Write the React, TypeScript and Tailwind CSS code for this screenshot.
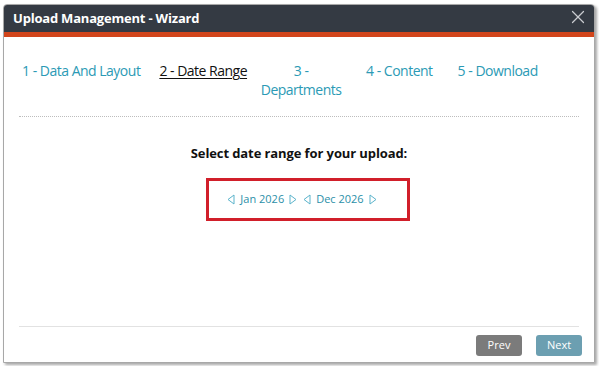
import { X } from "lucide-react";

const Tri = ({ dir }: { dir: "l" | "r" }) => (
  <svg width="8" height="11" viewBox="0 0 8 11" className="shrink-0">
    {dir === "l" ? (
      <path d="M7 1 L1 5.5 L7 10 Z" fill="none" stroke="#5bb3cb" strokeWidth="1" />
    ) : (
      <path d="M1 1 L7 5.5 L1 10 Z" fill="none" stroke="#5bb3cb" strokeWidth="1" />
    )}
  </svg>
);

export default function App() {
  return (
    <div className="w-[599px] h-[366px] bg-white pt-[4px] pl-[3px] font-['Open_Sans',sans-serif]">
      <div className="w-[592px] h-[359px] flex flex-col border border-[#a8a8a8] rounded-t-[4px] shadow-[2px_2px_3px_rgba(0,0,0,0.35)] bg-white overflow-hidden">
        {/* Header */}
        <div className="h-[27px] flex items-center justify-between bg-[#343a43] pl-[9px] pr-[5px] border-b-[5px] border-[#d2451b] box-content">
          <span className="text-white text-[13px] font-bold tracking-[-0.2px]">Upload Management - Wizard</span>
          <X size={22} strokeWidth={1.3} className="text-[#c9ccd0] -mt-[3px]" />
        </div>

        {/* Steps */}
        <div className="flex items-start pl-[18px] pt-[24px] text-[14px] leading-[19px] text-[#2b9ab5] tracking-[-0.5px]">
          <span>1 - Data And Layout</span>
          <span className="ml-[19px] text-[#111] underline underline-offset-2">2 - Date Range</span>
          <span className="ml-[13px] w-[82px] text-center">3 - Departments</span>
          <span className="ml-[24px]">4 - Content</span>
          <span className="ml-[25px]">5 - Download</span>
        </div>

        <div className="mx-[15px] mt-[17px] border-t border-dotted border-[#bdbdbd]" />

        {/* Body */}
        <div className="flex-1 flex flex-col items-center pt-[27px]">
          <div className="text-[13px] font-bold text-[#111] tracking-[-0.1px]">Select date range for your upload:</div>
          <div className="mt-[14px] ml-[18px] w-[204px] h-[43px] border-[3px] border-[#d11f2a] flex items-center justify-center gap-[6px] text-[11px] text-[#2b8fa8] pr-[12px]">
            <div className="flex items-center gap-[5px]">
              <Tri dir="l" />
              <span>Jan 2026</span>
              <Tri dir="r" />
            </div>
            <div className="flex items-center gap-[5px]">
              <Tri dir="l" />
              <span>Dec 2026</span>
              <Tri dir="r" />
            </div>
          </div>
        </div>

        {/* Footer */}
        <div className="mx-[15px] border-t border-[#e2e2e2]" />
        <div className="h-[35px] flex items-start justify-end gap-[14px] pr-[12px] pt-[8px]">
          <button className="w-[46px] h-[21px] rounded-[3px] bg-[#7b7b7b] text-white text-[11px]">Prev</button>
          <button className="w-[46px] h-[21px] rounded-[3px] bg-[#6c9fb1] text-white text-[11px]">Next</button>
        </div>
      </div>
    </div>
  );
}
